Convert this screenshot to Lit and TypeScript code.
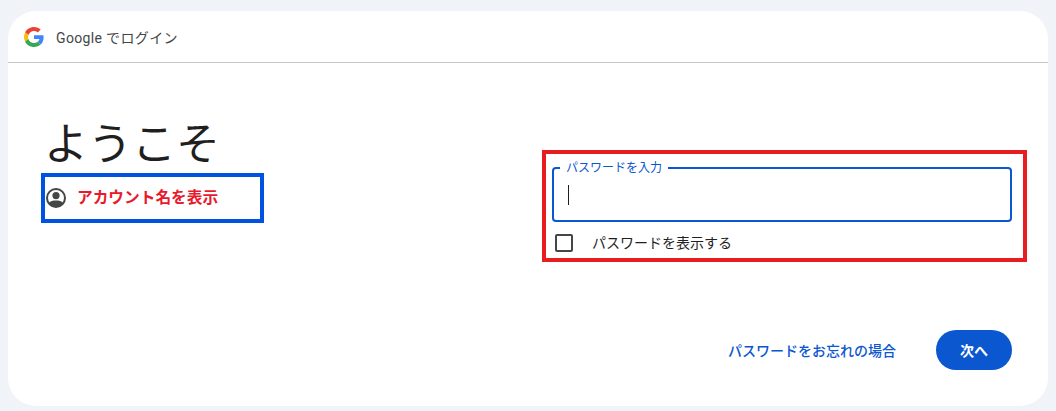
import { LitElement, html, css } from "lit";
import { customElement } from "lit/decorators.js";

@customElement("app-root")
export class AppRoot extends LitElement {
  static styles = css`
    :host {
      display: block;
      width: 1056px;
      height: 411px;
      box-sizing: border-box;
      padding: 11px 8px 5px;
      background: #f0f4f9;
      font-family: Roboto, "Noto Sans CJK JP", sans-serif;
      color: #1f1f1f;
      overflow: hidden;
    }
    .card {
      height: 100%;
      background: #fff;
      border-radius: 28px;
      display: flex;
      flex-direction: column;
    }
    .head {
      height: 52px;
      box-sizing: border-box;
      border-bottom: 1px solid #c7c7c7;
      display: flex;
      align-items: center;
      gap: 12px;
      padding: 0 0 0 16px;
      font-size: 14px;
      letter-spacing: 0.35px;
      color: #444746;
    }
    .g { width: 20px; height: 20px; display: block; }
    .body {
      display: flex;
      justify-content: space-between;
      padding: 0 21px 0 33px;
      height: 271px;
    }
    .left { padding-top: 55px; }
    h1 {
      margin: 0 0 0 3px;
      font-size: 44px;
      font-weight: 400;
      line-height: 55px;
      letter-spacing: 0;
      color: #1f1f1f;
    }
    .account {
      width: 223px;
      height: 50px;
      box-sizing: border-box;
      border: 4px solid #0052e0;
      display: flex;
      align-items: center;
      gap: 11px;
      padding-left: 1px;
      font-size: 15.7px;
      line-height: 20px;
      font-weight: 700;
      color: #e8192c;
    }
    .avatar { width: 20px; height: 20px; display: block; flex: none; }
    .form {
      margin-top: 87px;
      width: 485px;
      height: 112px;
      box-sizing: border-box;
      border: 4px solid #e81d20;
      padding: 13px 11px 0 6px;
    }
    .field {
      position: relative;
      height: 55px;
      box-sizing: border-box;
      border: 2px solid #0b57d0;
      border-radius: 4px;
      display: flex;
      align-items: center;
      padding-left: 14px;
    }
    .label {
      position: absolute;
      left: 6px;
      top: -9px;
      padding: 0 6px;
      background: #fff;
      font-size: 12px;
      line-height: 16px;
      color: #0b57d0;
    }
    .caret { width: 1px; height: 20px; background: #1f1f1f; }
    .show {
      display: flex;
      align-items: center;
      gap: 19px;
      margin: 11px 0 0 3px;
      font-size: 14px;
      line-height: 20px;
      color: #1f1f1f;
    }
    .box {
      width: 18px;
      height: 18px;
      box-sizing: border-box;
      border: 2px solid #444746;
      border-radius: 2px;
    }
    .foot {
      display: flex;
      justify-content: flex-end;
      align-items: center;
      gap: 40px;
      padding-right: 36px;
      margin-top: -4px;
    }
    .link {
      font-size: 14px;
      font-weight: 500;
      color: #0b57d0;
    }
    .next {
      width: 76px;
      height: 40px;
      border: 0;
      border-radius: 20px;
      background: #0b57d0;
      color: #fff;
      font: 700 14px Roboto, "Noto Sans CJK JP", sans-serif;
      padding: 0;
    }
  `;

  render() {
    return html`
      <div class="card">
        <div class="head">
          <svg class="g" viewBox="0 0 48 48">
            <path fill="#EA4335" d="M24 9.5c3.54 0 6.71 1.22 9.21 3.6l6.85-6.85C35.9 2.38 30.47 0 24 0 14.62 0 6.51 5.38 2.56 13.22l7.98 6.19C12.43 13.72 17.74 9.5 24 9.5z"/>
            <path fill="#4285F4" d="M46.98 24.55c0-1.57-.15-3.09-.38-4.55H24v9.02h12.94c-.58 2.96-2.26 5.48-4.78 7.18l7.73 6c4.51-4.18 7.09-10.36 7.09-17.65z"/>
            <path fill="#FBBC05" d="M10.53 28.59c-.48-1.45-.76-2.99-.76-4.59s.27-3.14.76-4.59l-7.98-6.19C.92 16.46 0 20.12 0 24c0 3.88.92 7.54 2.56 10.78l7.97-6.19z"/>
            <path fill="#34A853" d="M24 48c6.48 0 11.93-2.13 15.89-5.81l-7.73-6c-2.15 1.45-4.92 2.3-8.16 2.3-6.26 0-11.57-4.22-13.47-9.91l-7.98 6.19C6.51 42.62 14.62 48 24 48z"/>
          </svg>
          <span>Google でログイン</span>
        </div>
        <div class="body">
          <div class="left">
            <h1>ようこそ</h1>
            <div class="account">
              <svg class="avatar" viewBox="0 0 20 20">
                <circle cx="10" cy="10" r="9" fill="#fff" stroke="#444746" stroke-width="2"/>
                <circle cx="10" cy="7.6" r="3.6" fill="#444746"/>
                <path fill="#444746" d="M2.6 15.2C4.400 13 7 12.6 10 12.600s5.600.4 7.400 2.600c-1.600 2.400-4.300 3.800-7.400 3.800s-5.800-1.400-7.400-3.800z"/>
              </svg>
              <span>アカウント名を表示</span>
            </div>
          </div>
          <div class="form">
            <div class="field">
              <span class="label">パスワードを入力</span>
              <span class="caret"></span>
            </div>
            <div class="show">
              <span class="box"></span>
              <span>パスワードを表示する</span>
            </div>
          </div>
        </div>
        <div class="foot">
          <span class="link">パスワードをお忘れの場合</span>
          <button class="next">次へ</button>
        </div>
      </div>
    `;
  }
}
